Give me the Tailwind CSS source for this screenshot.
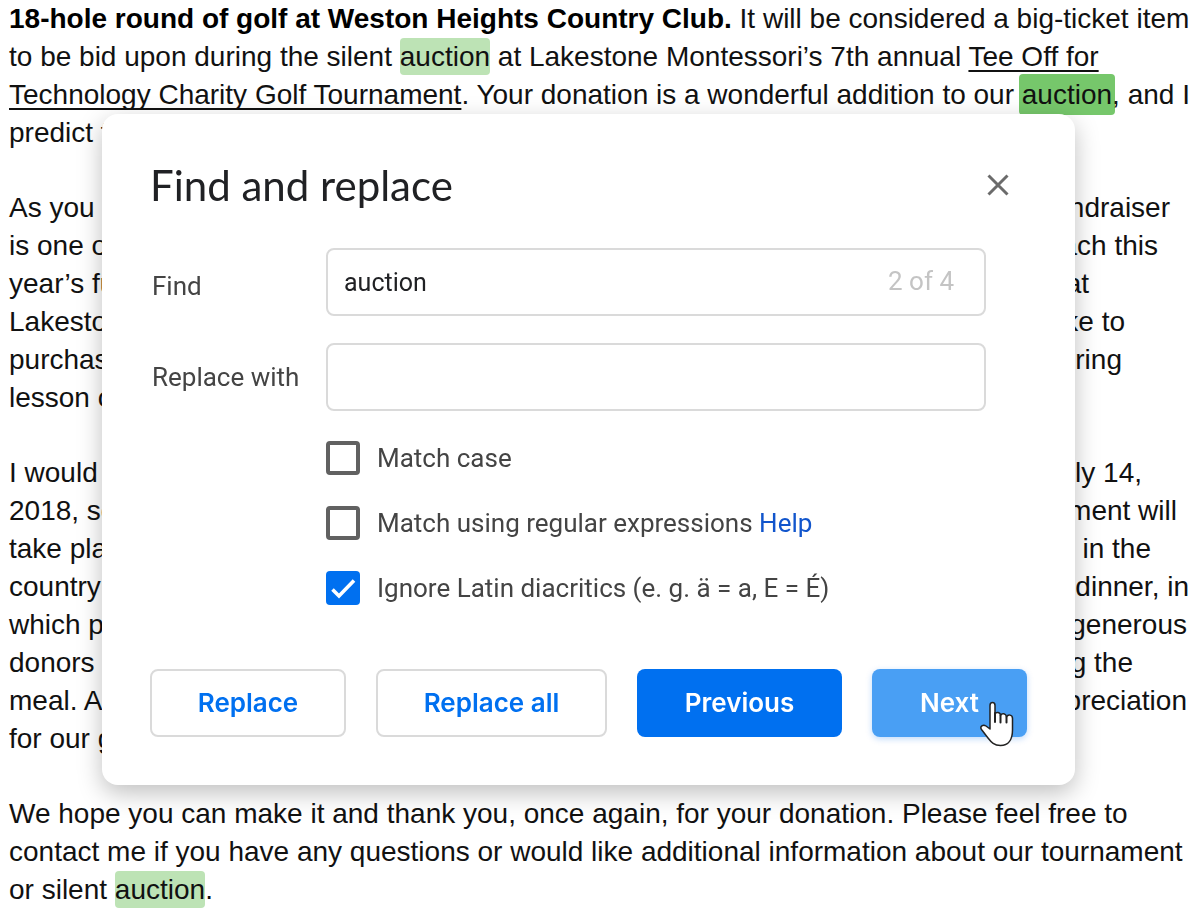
<!DOCTYPE html>
<html lang="en">
<head>
    <meta charset="UTF-8">
    <meta name="viewport" content="width=device-width, initial-scale=1.0">
    <title>Find and replace</title>
    <script src="https://cdn.jsdelivr.net/npm/@tailwindcss/browser@4"></script>
</head>
<body class="bg-white overflow-hidden">
    <!-- Document -->
    <main class="flex flex-col gap-[37px] pl-[9px] font-['Liberation_Sans',sans-serif] text-[28px] leading-[38px] text-[#111] whitespace-nowrap">
        <div>
            <p><strong class="font-bold text-black">18-hole round of golf at Weston Heights Country Club.</strong> It will be considered a big-ticket item</p>
            <p>to be bid upon during the silent <mark class="bg-[#bde3b5] text-inherit rounded-sm py-[3px]">auction</mark> at Lakestone Montessori’s 7th annual <span class="underline decoration-2 underline-offset-4 [text-decoration-skip-ink:none]">Tee Off for</span></p>
            <p><span class="underline decoration-2 underline-offset-4 [text-decoration-skip-ink:none]">Technology Charity Golf Tournament</span>. Your donation is a wonderful addition to our <mark class="bg-[#76c76b] text-inherit rounded-sm py-[5px] px-[3px] -mx-[3px]">auction</mark>, and I</p>
            <p>predict that</p>
        </div>
        <div>
            <p class="flex justify-between pr-[30px]"><span>As you</span><span>fundraiser</span></p>
            <p class="flex justify-between pr-[42px]"><span>is one of</span><span>teach this</span></p>
            <p class="flex justify-between pr-[111px]"><span>year’s fun</span><span>at</span></p>
            <p class="flex justify-between pr-[75px]"><span>Lakestone</span><span>like to</span></p>
            <p class="flex justify-between pr-[78px]"><span>purchase</span><span>tutoring</span></p>
            <p class="flex justify-between"><span>lesson or</span></p>
        </div>
        <div>
            <p class="flex justify-between pr-[58px]"><span>I would</span><span>July 14,</span></p>
            <p class="flex justify-between pr-[23px]"><span>2018, so</span><span>tournament will</span></p>
            <p class="flex justify-between pr-[49px]"><span>take place</span><span>in the</span></p>
            <p class="flex justify-between pr-[11px]"><span>country</span><span>dinner, in</span></p>
            <p class="flex justify-between pr-[13px]"><span>which pa</span><span>generous</span></p>
            <p class="flex justify-between pr-[67px]"><span>donors</span><span>during the</span></p>
            <p class="flex justify-between pr-[13px]"><span>meal. All</span><span>appreciation</span></p>
            <p class="flex justify-between"><span>for our gu</span></p>
        </div>
        <div>
            <p>We hope you can make it and thank you, once again, for your donation. Please feel free to</p>
            <p>contact me if you have any questions or would like additional information about our tournament</p>
            <p>or silent <mark class="bg-[#bde3b5] text-inherit rounded-sm py-[3px]">auction</mark>.</p>
        </div>
    </main>

    <!-- Find and replace dialog -->
    <div class="fixed inset-0 pt-[114px] pl-[102px] pr-[125px]">
        <form role="dialog" aria-labelledby="dialog-title" class="bg-white rounded-2xl shadow-[0_8px_24px_rgba(0,0,0,0.25)] p-[48px] font-[Roboto,sans-serif] text-[26px] leading-[32px] text-[#444]">
            <div class="flex items-center justify-between pr-[16px] h-[46px]">
                <h1 id="dialog-title" class="font-[Lato,sans-serif] text-[42px] leading-[46px] text-[#202124]">Find and replace</h1>
                <button type="button" aria-label="Close" class="w-[26px] h-[26px] text-[#6b6b6b]">
                    <svg viewBox="0 0 26 26" fill="none" stroke="currentColor" stroke-width="3"><path d="M3.5 3.5 22.500 22.500M22.500 3.5 3.5 22.500"/></svg>
                </button>
            </div>

            <div class="mt-[40px] mr-[41px] grid grid-cols-[176px_1fr] gap-y-[27px] items-center">
                <label for="find" class="pl-[2px] pt-[8px]">Find</label>
                <div class="relative">
                    <input id="find" type="text" value="auction" class="w-full h-[68px] border-2 border-[#dadada] rounded-lg px-[16px] text-[25px] text-[#202124]">
                    <span class="absolute right-[32px] top-[17px] text-[#c4c4c4]">2 of 4</span>
                </div>
                <label for="replace" class="pl-[2px]">Replace with</label>
                <input id="replace" type="text" class="w-full h-[68px] border-2 border-[#dadada] rounded-lg px-[16px] text-[25px] text-[#202124]">
            </div>

            <div class="mt-[30px] ml-[176px] flex flex-col gap-[31px]">
                <div class="flex items-center gap-[17px] h-[34px]">
                    <input id="match-case" type="checkbox" class="appearance-none w-[34px] h-[34px] border-4 border-[#616161] rounded-sm">
                    <label for="match-case">Match case</label>
                </div>
                <div class="flex items-center gap-[17px] h-[34px]">
                    <input id="regex" type="checkbox" class="appearance-none w-[34px] h-[34px] border-4 border-[#616161] rounded-sm">
                    <div><label for="regex">Match using regular expressions</label> <a href="#" class="text-[#1155cc]">Help</a></div>
                </div>
                <div class="flex items-center gap-[17px] h-[34px]">
                    <div class="relative w-[34px] h-[34px]">
                        <input id="diacritics" type="checkbox" checked class="block appearance-none w-[34px] h-[34px] bg-[#0070f0] rounded-sm">
                        <svg class="absolute inset-0 pointer-events-none" viewBox="0 0 34 34" fill="none" stroke="white" stroke-width="3.600"><path d="M6.500 18.500 13 25 28 9.500"/></svg>
                    </div>
                    <label for="diacritics">Ignore Latin diacritics (e. g. ä = a, E = É)</label>
                </div>
            </div>

            <div class="mt-[64px] flex gap-[30px] font-[Inter] font-semibold">
                <button type="button" class="w-[196px] h-[68px] border-2 border-[#dadada] rounded-lg text-[#0070f0]">Replace</button>
                <button type="button" class="w-[231px] h-[68px] border-2 border-[#dadada] rounded-lg text-[#0070f0]">Replace all</button>
                <button type="button" class="w-[205px] h-[68px] bg-[#0070f0] rounded-lg text-white">Previous</button>
                <button type="button" class="relative w-[155px] h-[68px] bg-[#499ff4] rounded-lg text-white shadow-[0_2px_6px_rgba(0,112,240,0.25)]">
                    Next
                    <!-- Hand pointer -->
                    <svg class="absolute left-[107px] top-[31px] w-[36px] h-[48px]" viewBox="0 0 36 48" fill="white" stroke="#222" stroke-width="1.500" stroke-linejoin="round" stroke-linecap="round">
                        <path d="M11 29V5.500C11 1.500 16 1.500 16 5.500V14C17 11.500 21.500 12 21.500 15.500C23 12.500 27 13.500 27.500 17C29 14 33.500 14.500 33.500 18.500V30C33.500 40 29 45.500 21.500 45.500C15 45.500 12.500 42.500 9 38L2.500 29.500C0.500 26.500 4 24 7 26Z"/>
                        <path d="M16 13V22M21.500 15.500V22.500M27.500 17V22.500" stroke-width="2"/>
                    </svg>
                </button>
            </div>
        </form>
    </div>
</body>
</html>
